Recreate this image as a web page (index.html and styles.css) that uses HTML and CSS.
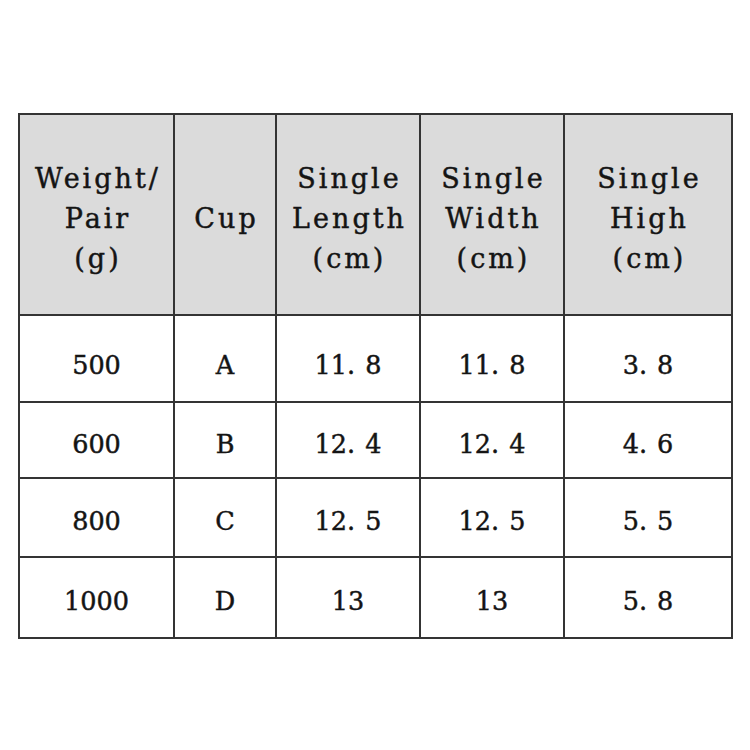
FILE: index.html
```html
<!DOCTYPE html>
<html>
<head>
<meta charset="utf-8">
<link rel="stylesheet" href="styles.css">
</head>
<body>
<div class="page">
  <div class="sheet">
    <div class="cell head"><span>Weight/<br>Pair<br>(g)</span></div>
    <div class="cell head"><span>Cup</span></div>
    <div class="cell head"><span>Single<br>Length<br>(cm)</span></div>
    <div class="cell head"><span>Single<br>Width<br>(cm)</span></div>
    <div class="cell head"><span>Single<br>High<br>(cm)</span></div>

    <div class="cell body first">500</div>
    <div class="cell body first">A</div>
    <div class="cell body first">11<span class="dot">.</span>8</div>
    <div class="cell body first">11<span class="dot">.</span>8</div>
    <div class="cell body first">3<span class="dot">.</span>8</div>

    <div class="cell body">600</div>
    <div class="cell body">B</div>
    <div class="cell body">12<span class="dot">.</span>4</div>
    <div class="cell body">12<span class="dot">.</span>4</div>
    <div class="cell body">4<span class="dot">.</span>6</div>

    <div class="cell body">800</div>
    <div class="cell body">C</div>
    <div class="cell body">12<span class="dot">.</span>5</div>
    <div class="cell body">12<span class="dot">.</span>5</div>
    <div class="cell body">5<span class="dot">.</span>5</div>

    <div class="cell body">1000</div>
    <div class="cell body">D</div>
    <div class="cell body">13</div>
    <div class="cell body">13</div>
    <div class="cell body">5<span class="dot">.</span>8</div>
  </div>
</div>
</body>
</html>
```

FILE: styles.css
```css
html, body {
  margin: 0;
  padding: 0;
  background: #ffffff;
}

.page {
  width: 750px;
  height: 750px;
  padding: 113px 0 0 18px;
  box-sizing: border-box;
}

.sheet {
  display: grid;
  grid-template-columns: 153px 100px 142px 142px 166px;
  grid-template-rows: 199px 85px 74px 77px 79px;
  gap: 2px;
  padding: 2px;
  width: max-content;
  background: #343434;
  font-family: "DejaVu Serif", "Liberation Serif", serif;
  color: #141414;
  -webkit-text-stroke: 0.45px #141414;
}

.cell {
  display: flex;
  align-items: center;
  justify-content: center;
  text-align: center;
  box-sizing: border-box;
}

.head {
  background: #dbdbdb;
  font-size: 27px;
  line-height: 40px;
  letter-spacing: 3px;
  padding-top: 8px;
  padding-left: 3px;
}

.body {
  background: #ffffff;
  font-size: 25.5px;
  line-height: 30px;
  padding-top: 7px;
}

.body.first {
  padding-top: 12px;
}

.dot {
  margin-right: 10px;
}
```
